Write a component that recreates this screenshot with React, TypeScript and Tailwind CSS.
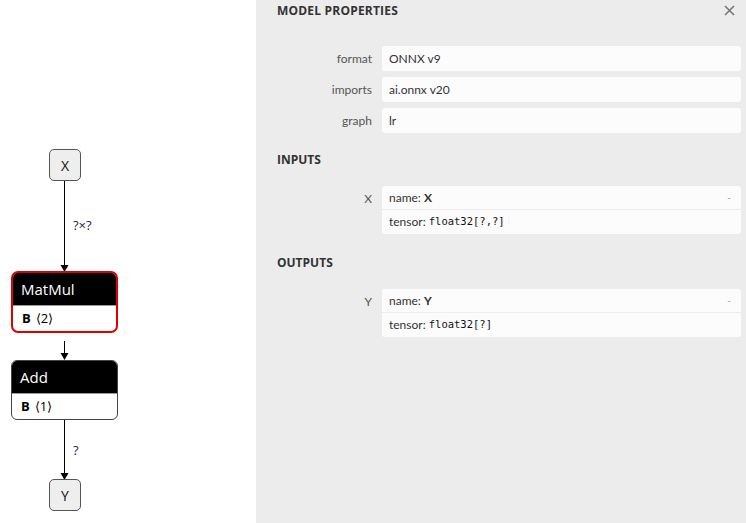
import React from 'react';

const ui = { fontFamily: '"Open Sans", "Noto Sans", sans-serif' };
const body = { fontFamily: 'Lato, "Open Sans", sans-serif' };
const mono = { fontFamily: '"DejaVu Sans Mono", "Liberation Mono", monospace' };

function InputNode({ label, top }: { label: string; top: number }) {
    return (
        <div
            className="absolute left-[49px] w-[32px] h-[32px] rounded-[5px] border-[1.5px] border-[#555] bg-[#eeeeee] flex items-center justify-center text-[14px] text-[#111]"
            style={{ top }}
        >
            {label}
        </div>
    );
}

function OpNode({ title, arg, top, selected }: { title: string; arg: string; top: number; selected?: boolean }) {
    return (
        <div
            className={
                selected
                    ? 'absolute left-[11px] w-[107px] rounded-[7px] border-2 border-[#e00000] bg-white overflow-hidden'
                    : 'absolute left-[11px] w-[107px] rounded-[6px] border border-[#444] bg-white overflow-hidden'
            }
            style={{ top }}
        >
            <div className="h-[32px] bg-black text-white text-[15px] flex items-center pl-[8px]">{title}</div>
            <div className="h-[26px] border-t border-[#999] flex items-center pl-[9px] text-[13px] text-black">
                <span className="font-bold mr-[5px]">B</span>
                <span>{arg}</span>
            </div>
        </div>
    );
}

function Graph() {
    return (
        <div className="relative w-[256px] h-[523px] bg-white shrink-0">
            <svg className="absolute inset-0" width="256" height="523">
                <g stroke="#000" strokeWidth="1">
                    <line x1="64.5" y1="181" x2="64.5" y2="266" />
                    <line x1="64.5" y1="341" x2="64.5" y2="354" />
                    <line x1="64.5" y1="420" x2="64.5" y2="474" />
                </g>
                <g fill="#000">
                    <path d="M60.5 265 L68.5 265 L64.5 272 Z" />
                    <path d="M60.5 353 L68.5 353 L64.5 360 Z" />
                    <path d="M60.5 473 L68.5 473 L64.5 480 Z" />
                </g>
            </svg>
            <div className="absolute left-[73px] top-[217px] text-[13px] text-[#1a2a4a] leading-[16px]">?×?</div>
            <div className="absolute left-[73px] top-[442px] text-[13px] text-[#1a2a4a] leading-[16px]">?</div>
            <InputNode label="X" top={149} />
            <OpNode title="MatMul" arg="⟨2⟩" top={271} selected />
            <OpNode title="Add" arg="⟨1⟩" top={360} />
            <InputNode label="Y" top={479} />
        </div>
    );
}

function Prop({ name, value }: { name: string; value: string }) {
    return (
        <div className="flex h-[25px] mb-[6px]" style={body}>
            <div className="w-[126px] pr-[10px] text-right text-[12px] text-[#555] leading-[25px]">{name}</div>
            <div className="flex-1 mr-[5px] bg-[#fcfcfc] rounded-[3px] pl-[7px] text-[12px] text-[#333] leading-[25px]">{value}</div>
        </div>
    );
}

function Arg({ name, type }: { name: string; type: string }) {
    return (
        <div className="flex" style={body}>
            <div className="w-[126px] pr-[10px] text-right text-[12px] text-[#555] leading-[25px]">{name}</div>
            <div className="flex-1 mr-[5px] bg-[#fcfcfc] rounded-[3px] text-[12px] text-[#333]">
                <div className="h-[24px] flex items-center justify-between pl-[7px] pr-[10px] border-b border-[#ececec]">
                    <span>
                        name: <span className="font-bold">{name}</span>
                    </span>
                    <span className="text-[#999] text-[10px]">-</span>
                </div>
                <div className="h-[24px] flex items-center pl-[7px]">
                    <span>tensor:&nbsp;</span>
                    <span style={mono} className="text-[10.5px] text-[#111]">{type}</span>
                </div>
            </div>
        </div>
    );
}

function Sidebar() {
    return (
        <div className="relative flex-1 h-[523px] bg-[#ececec]">
            <div className="pl-[21px] pt-[3px] h-[46px] text-[12px] font-bold text-[#333] leading-[16px] tracking-[0.2px]">
                MODEL PROPERTIES
            </div>
            <button className="absolute right-[11px] top-[5px] w-[11px] h-[11px]">
                <svg width="11" height="11" viewBox="0 0 11 11">
                    <path d="M1 1 L10 10 M10 1 L1 10" stroke="#777" strokeWidth="1.6" />
                </svg>
            </button>
            <Prop name="format" value="ONNX v9" />
            <Prop name="imports" value="ai.onnx v20" />
            <Prop name="graph" value="lr" />
            <div className="pl-[21px] mt-[19px] h-[16px] text-[12px] font-bold text-[#333] leading-[16px]">INPUTS</div>
            <div className="mt-[18px]">
                <Arg name="X" type="float32[?,?]" />
            </div>
            <div className="pl-[21px] mt-[21px] h-[16px] text-[12px] font-bold text-[#333] leading-[16px]">OUTPUTS</div>
            <div className="mt-[18px]">
                <Arg name="Y" type="float32[?]" />
            </div>
        </div>
    );
}

export default function App() {
    return (
        <div className="flex w-[746px] h-[523px] overflow-hidden" style={ui}>
            <Graph />
            <Sidebar />
        </div>
    );
}
